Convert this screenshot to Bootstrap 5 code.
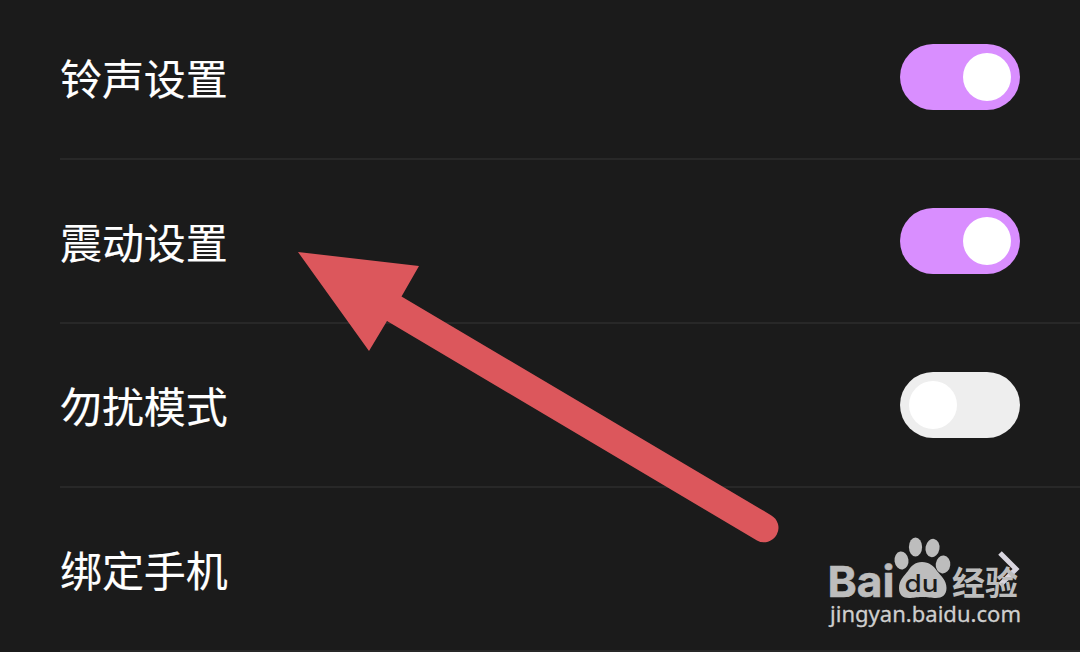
<!DOCTYPE html>
<html lang="zh-CN">
<head>
  <meta charset="UTF-8" />
  <meta name="viewport" content="width=device-width, initial-scale=1.0"/>
  <title>设置</title>
  <link href="https://cdn.jsdelivr.net/npm/bootstrap@5.3.0/dist/css/bootstrap.min.css" rel="stylesheet" />
  <style>
    body {
      font-family: "Noto Sans CJK SC", sans-serif;
      background: #1b1b1b;
      color: #fff;
      height: 652px;
    }

    /* the list is scrolled up a little */
    .settings {
      margin-top: -4px;
      padding-left: 60px;
    }

    .setting-row {
      height: 164px;
      padding-right: 60px;
      border-bottom: 2px solid #282828;
    }

    .setting-label {
      font-size: 42px;
      line-height: 60px;
      letter-spacing: -.1px;
      -webkit-text-stroke: .15px #fff;
    }

    .form-check-input.toggle {
      width: 120px;
      height: 66px;
      padding: 9px;
      border: 0;
      border-radius: 33px;
      background: #eee;
      display: flex;
      box-shadow: none;
    }

    .form-check-input.toggle::before {
      content: "";
      width: 48px;
      height: 48px;
      border-radius: 50%;
      background: #fff;
    }

    .form-check-input.toggle:checked {
      background: #d98eff;
      justify-content: flex-end;
    }

    .overlay {
      pointer-events: none;
    }
  </style>
</head>
<body class="position-relative overflow-hidden">

  <div class="settings">
    <div class="setting-row d-flex align-items-center justify-content-between">
      <label class="setting-label" for="ring">铃声设置</label>
      <input class="form-check-input toggle m-0" type="checkbox" role="switch" id="ring" checked>
    </div>
    <div class="setting-row d-flex align-items-center justify-content-between">
      <label class="setting-label" for="vibrate">震动设置</label>
      <input class="form-check-input toggle m-0" type="checkbox" role="switch" id="vibrate" checked>
    </div>
    <div class="setting-row d-flex align-items-center justify-content-between">
      <label class="setting-label" for="quiet">勿扰模式</label>
      <input class="form-check-input toggle m-0" type="checkbox" role="switch" id="quiet">
    </div>
    <div class="setting-row d-flex align-items-center justify-content-between">
      <span class="setting-label">绑定手机</span>
      <svg width="24" height="40" viewBox="0 0 24 40" fill="none" stroke="#d8d5df" stroke-width="5">
        <path d="M4 4 20 20 4 36"/>
      </svg>
    </div>
  </div>

  <!-- arrow and watermark lie over the list -->
  <svg class="overlay position-absolute top-0 start-0" width="1080" height="652" viewBox="0 0 1080 652">
    <path fill="#dc575c" d="M298 252 419 266 401.500 296.500 771 515.200A14 14 0 0 1 757 540.500L387 321 369 351Z"/>

    <g fill="#bdbdbd">
      <text x="827.500" y="597" font-family="Inter, sans-serif" font-size="43" font-weight="700" textLength="67" lengthAdjust="spacingAndGlyphs" stroke="#bdbdbd" stroke-width=".6">Bai</text>
      <ellipse cx="901.500" cy="560.500" rx="7" ry="9" transform="rotate(-8 901.500 560.500)"/>
      <ellipse cx="915.500" cy="547" rx="6.600" ry="9.400"/>
      <ellipse cx="932.500" cy="548" rx="7" ry="9.200" transform="rotate(10 932.500 548)"/>
      <ellipse cx="943" cy="564.500" rx="7.300" ry="9" transform="rotate(6 943 564.500)"/>
      <path d="M922 562C929 562 934 566 937 571C941 576 946.500 580 946.500 588C946.500 595 942 598 936 598C931 598 928 597 922 597C916 597 914 598 909 598C903 598 899 595 899 588C899 580 904 576 908 571C911 566 915 562 922 562Z"/>
      <text x="952" y="594.500" font-family="Noto Sans CJK SC, sans-serif" font-size="33" font-weight="700" textLength="66" lengthAdjust="spacingAndGlyphs">经验</text>
      <text x="830" y="622" fill="#cecece" font-family="Noto Sans, sans-serif" font-size="22" textLength="191" lengthAdjust="spacingAndGlyphs" stroke="#cecece" stroke-width=".3">jingyan.baidu.com</text>
    </g>
    <text x="904.500" y="592" fill="#1b1b1b" font-family="Inter, sans-serif" font-size="24" font-weight="500" textLength="34" lengthAdjust="spacingAndGlyphs">du</text>
  </svg>

  <script src="https://cdn.jsdelivr.net/npm/bootstrap@5.3.0/dist/js/bootstrap.bundle.min.js"></script>
</body>
</html>
